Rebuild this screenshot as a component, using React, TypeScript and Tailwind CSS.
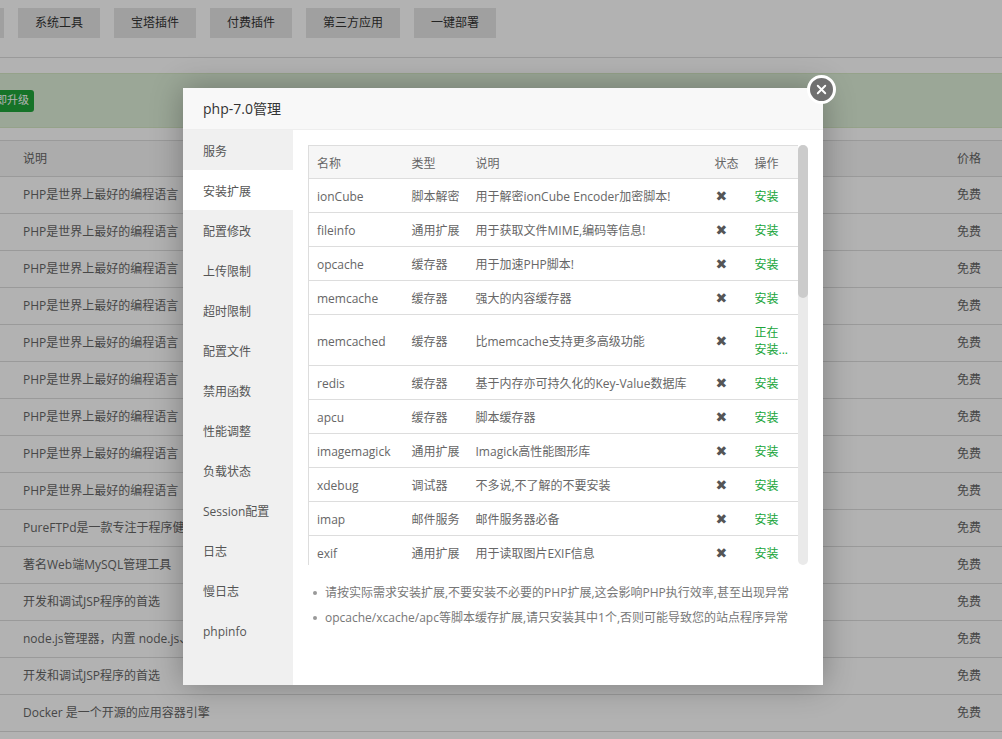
import { X } from "lucide-react";

const navButtons = ["运行环境", "系统工具", "宝塔插件", "付费插件", "第三方应用", "一键部署"];

const bgRows = [
  "PHP是世界上最好的编程语言",
  "PHP是世界上最好的编程语言",
  "PHP是世界上最好的编程语言",
  "PHP是世界上最好的编程语言",
  "PHP是世界上最好的编程语言",
  "PHP是世界上最好的编程语言",
  "PHP是世界上最好的编程语言",
  "PHP是世界上最好的编程语言",
  "PHP是世界上最好的编程语言",
  "PureFTPd是一款专注于程序健壮和软件安全的免费FTP服务器软件",
  "著名Web端MySQL管理工具",
  "开发和调试JSP程序的首选",
  "node.js管理器，内置 node.js、npm、nvm、pm2",
  "开发和调试JSP程序的首选",
  "Docker 是一个开源的应用容器引擎",
  "Nginx是一款轻量级的Web服务器",
];

const sideNav = [
  "服务",
  "安装扩展",
  "配置修改",
  "上传限制",
  "超时限制",
  "配置文件",
  "禁用函数",
  "性能调整",
  "负载状态",
  "Session配置",
  "日志",
  "慢日志",
  "phpinfo",
];

type Ext = { name: string; type: string; desc: string; installing?: boolean };

const extensions: Ext[] = [
  { name: "ionCube", type: "脚本解密", desc: "用于解密ionCube Encoder加密脚本!" },
  { name: "fileinfo", type: "通用扩展", desc: "用于获取文件MIME,编码等信息!" },
  { name: "opcache", type: "缓存器", desc: "用于加速PHP脚本!" },
  { name: "memcache", type: "缓存器", desc: "强大的内容缓存器" },
  { name: "memcached", type: "缓存器", desc: "比memcache支持更多高级功能", installing: true },
  { name: "redis", type: "缓存器", desc: "基于内存亦可持久化的Key-Value数据库" },
  { name: "apcu", type: "缓存器", desc: "脚本缓存器" },
  { name: "imagemagick", type: "通用扩展", desc: "Imagick高性能图形库" },
  { name: "xdebug", type: "调试器", desc: "不多说,不了解的不要安装" },
  { name: "imap", type: "邮件服务", desc: "邮件服务器必备" },
  { name: "exif", type: "通用扩展", desc: "用于读取图片EXIF信息" },
  { name: "intl", type: "通用扩展", desc: "提供国际化支持" },
  { name: "xsl", type: "通用扩展", desc: "xsl解析扩展" },
];

const notes = [
  "请按实际需求安装扩展,不要安装不必要的PHP扩展,这会影响PHP执行效率,甚至出现异常",
  "opcache/xcache/apc等脚本缓存扩展,请只安装其中1个,否则可能导致您的站点程序异常",
];

function BackgroundPage() {
  return (
    <div className="w-full">
      {/* top menu */}
      <div className="h-[58px] border-b border-[#ddd] pt-[8px]">
        <div className="flex gap-[14px] -ml-[78px]">
          {navButtons.map((b) => (
            <div
              key={b}
              className="h-[30px] px-[17px] min-w-[82px] flex items-center justify-center bg-[#e6e6e6] text-[12px] text-[#333] whitespace-nowrap"
            >
              {b}
            </div>
          ))}
        </div>
      </div>

      {/* notice */}
      <div className="mt-[15px] h-[55px] bg-[#dff0d8] border-y border-[#d6e9c6] flex items-center">
        <div className="-ml-[20px] h-[22px] px-[5px] rounded-[3px] bg-[#20a53a] text-white text-[11px] flex items-center whitespace-nowrap">
          立即升级
        </div>
      </div>

      {/* soft list */}
      <div className="mt-[12px] text-[12px] text-[#666]">
        <div className="h-[37px] pt-[1px] flex items-center border-y border-[#ddd] bg-[#f6f6f6]">
          <div className="flex-1 pl-[23px]">说明</div>
          <div className="w-[45px]">价格</div>
        </div>
        {bgRows.map((r, i) => (
          <div key={i} className="h-[37px] flex items-center border-b border-[#ddd]">
            <div className="flex-1 pl-[23px] whitespace-nowrap overflow-hidden">{r}</div>
            <div className="w-[45px]">免费</div>
          </div>
        ))}
      </div>
    </div>
  );
}

function ExtensionTable() {
  const cell = "pl-[8px] pt-[2px] pb-0 h-[33px] align-middle border-b border-[#ddd] whitespace-nowrap";
  return (
    <div className="flex h-[420px]">
      <div className="w-[490px] overflow-hidden">
        <table className="w-[490px] table-fixed border-collapse border border-[#ddd] text-[12px] text-[#666] leading-[17px]">
          <colgroup>
            <col className="w-[95px]" />
            <col className="w-[64px]" />
            <col className="w-[239px]" />
            <col className="w-[40px]" />
            <col className="w-[52px]" />
          </colgroup>
          <thead>
            <tr className="bg-[#f6f6f6]">
              <th className={cell + " text-left font-normal"}>名称</th>
              <th className={cell + " text-left font-normal"}>类型</th>
              <th className={cell + " text-left font-normal"}>说明</th>
              <th className={cell + " text-left font-normal"}>状态</th>
              <th className={cell + " text-left font-normal"}>操作</th>
            </tr>
          </thead>
          <tbody>
            {extensions.map((e) => (
              <tr key={e.name} className={e.installing ? "h-[51px]" : "h-[34px]"}>
                <td className={cell}>{e.name}</td>
                <td className={cell}>{e.type}</td>
                <td className={cell + " overflow-hidden"}>{e.desc}</td>
                <td className={cell}>
                  <span className="ml-[1px] font-['DejaVu_Sans',sans-serif] text-[14px] text-[#555]">✖</span>
                </td>
                <td className={cell + " text-[#20a53a]"}>
                  {e.installing ? (
                    <>
                      正在
                      <br />
                      安装...
                    </>
                  ) : (
                    "安装"
                  )}
                </td>
              </tr>
            ))}
          </tbody>
        </table>
      </div>
      {/* scrollbar */}
      <div className="w-[10px] h-full bg-[#eaeaea] rounded-[5px]">
        <div className="h-[153px] bg-[#cbcbcb] rounded-[5px]" />
      </div>
    </div>
  );
}

function PhpModal() {
  return (
    <div className="absolute left-[183px] top-[88px] w-[640px] h-[597px] bg-white shadow-[0_0_30px_rgba(0,0,0,0.3)] flex flex-col">
      <div className="h-[42px] shrink-0 bg-[#f8f8f8] border-b border-[#eee] pl-[20px] flex items-center text-[14px] text-[#333]">
        php-7.0管理
      </div>
      <div className="flex flex-1 min-h-0">
        <div className="w-[110px] shrink-0 bg-[#f0f0f0]">
          {sideNav.map((n) => (
            <div
              key={n}
              className={
                n === "安装扩展"
                  ? "h-[40px] pl-[20px] pt-[3px] flex items-center text-[12px] text-[#555] bg-white"
                  : "h-[40px] pl-[20px] pt-[3px] flex items-center text-[12px] text-[#555]"
              }
            >
              {n}
            </div>
          ))}
        </div>
        <div className="flex-1 px-[15px] pt-[15px]">
          <ExtensionTable />
          <ul className="mt-[15px] text-[12px] text-[#777] leading-[25px]">
            {notes.map((t) => (
              <li key={t} className="flex items-center whitespace-nowrap">
                <span className="ml-[5px] mr-[8px] w-[4px] h-[4px] rounded-full bg-[#999] shrink-0" />
                {t}
              </li>
            ))}
          </ul>
        </div>
      </div>
      <div className="absolute -right-[13px] -top-[13px] w-[29px] h-[29px] rounded-full bg-[#707070] border-[3px] border-white flex items-center justify-center">
        <X className="w-[15px] h-[15px] text-white" strokeWidth={3} />
      </div>
    </div>
  );
}

export default function App() {
  return (
    <div className="relative w-full h-screen overflow-hidden bg-white font-['Open_Sans','Noto_Sans_CJK_SC',sans-serif]">
      <BackgroundPage />
      <div className="absolute inset-0 bg-black/30" />
      <PhpModal />
    </div>
  );
}
